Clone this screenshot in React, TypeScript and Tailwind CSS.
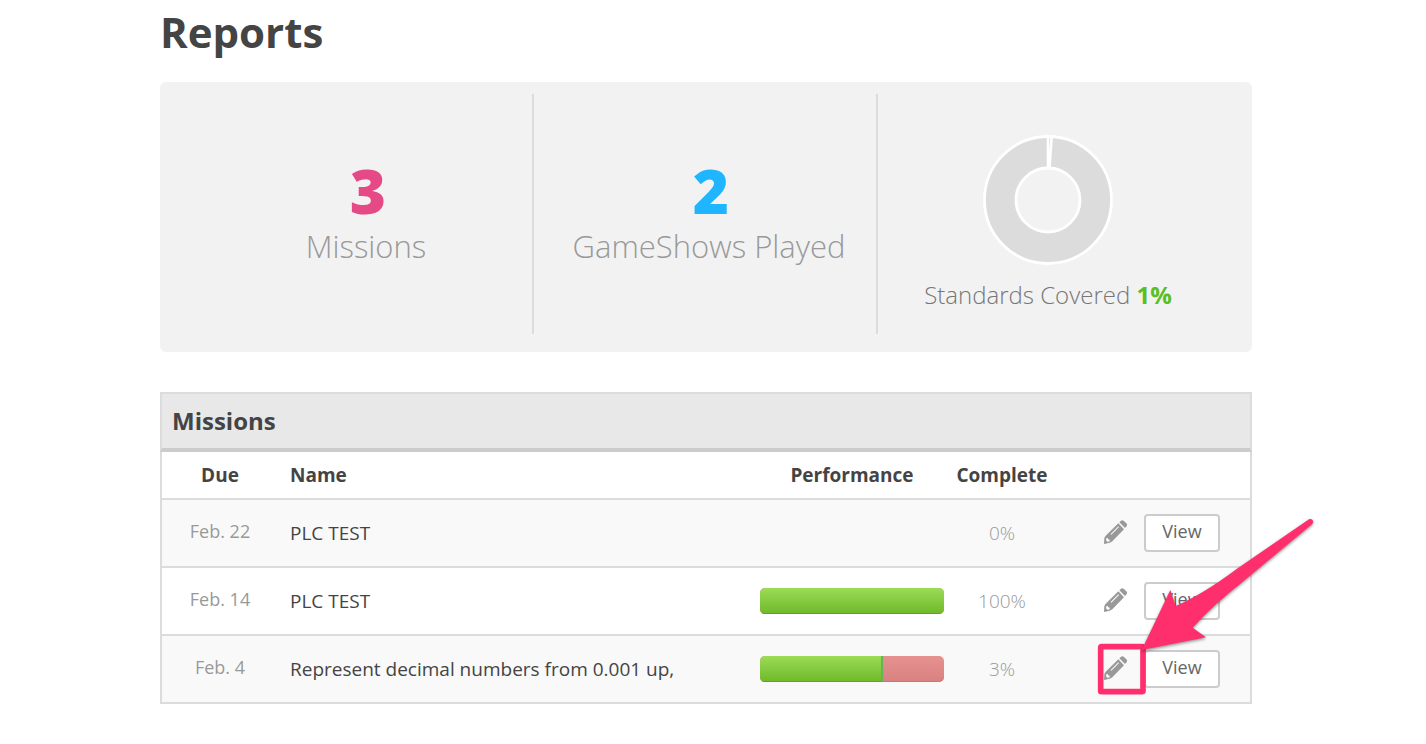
import clsx from "clsx";

interface Mission {
  id: number;
  due: string;
  name: string;
  complete: string;
  correct: number | null;
}

const missions: Mission[] = [
  { id: 1, due: "Feb. 22", name: "PLC TEST", complete: "0%", correct: null },
  { id: 2, due: "Feb. 14", name: "PLC TEST", complete: "100%", correct: 100 },
  {
    id: 3,
    due: "Feb. 4",
    name: "Represent decimal numbers from 0.001 up,",
    complete: "3%",
    correct: 67,
  },
];

const PencilIcon = () => (
  <svg viewBox="0 0 69 72" className="w-[23px] h-6 fill-[#999999]" aria-hidden="true">
    <path d="M46 7 L51 2 Q55 -1 59 2 L67 10 Q71 14 68 18 L63 24 Z" />
    <path
      fillRule="evenodd"
      d="M43 10 L60 28 L25 64 Q22 67 17 68 L0 72 L1 55 Q2 50 5 47 Z M20 42 L22 44 L45 21 L43 19 Z M7 55 L6 61 L11 66 L17 64 L17 59 L13 58 L11 54 Z"
    />
  </svg>
);

const StandardsChart = () => (
  <svg viewBox="0 0 130 130" className="w-[130px] h-[130px]" role="img" aria-label="Standards Covered">
    <circle cx="65" cy="65" r="48" fill="none" stroke="#dcdcdc" strokeWidth="32" />
    <circle cx="65" cy="65" r="63.5" fill="none" stroke="#ffffff" strokeWidth="2.8" />
    <circle cx="65" cy="65" r="32" fill="none" stroke="#ffffff" strokeWidth="2.8" />
    <path d="M65 33 V2 M66.5 33 L68.6 2" stroke="#ffffff" strokeWidth="2.6" />
  </svg>
);

interface StatProps {
  value: number;
  label: string;
  className: string;
  valueClassName: string;
}

const Stat = ({ value, label, className, valueClassName }: StatProps) => (
  <div className={clsx("flex flex-col items-center border-r-2 border-[#dcdcdc] pt-16", className)}>
    <span className={clsx("pl-1 text-[62px] leading-[64px] font-extrabold", valueClassName)}>
      {value}
    </span>
    <span className="text-[31px] leading-[48px] font-light text-[#999999]">{label}</span>
  </div>
);

const PerformanceBar = ({ correct }: { correct: number }) => (
  <div className="flex overflow-hidden h-[26px] rounded-[5px] bg-linear-to-b from-[#e69290] to-[#d98180] shadow-[inset_0_-1px_0_#c97776]">
    <div
      className={clsx(
        "bg-linear-to-b from-[#9bdc55] to-[#71ba2b] border-b border-[#5da51f]",
        correct < 100 && "border-r-2 border-r-[#64b558]"
      )}
      style={{ width: `${correct}%` }}
    />
  </div>
);

const Arrow = () => (
  <svg
    viewBox="0 0 720 612"
    className="absolute -right-[68px] bottom-0 w-[240px] h-[204px] pointer-events-none"
    aria-hidden="true"
  >
    <rect
      x="62"
      y="440"
      width="127"
      height="135"
      rx="3"
      fill="none"
      stroke="#ff2f6e"
      strokeWidth="17"
      strokeLinejoin="round"
    />
    <path
      className="drop-shadow-[0_4px_4px_rgba(0,0,0,0.45)]"
      d="M185 450 L271 270 L287 318 Q370 282 470 207 L687 58 Q695 54 699 62 Q701 69 694 74 L490 244 Q400 315 338 383 L378 412 Z"
      fill="#ff2f6e"
    />
  </svg>
);

const App = () => {
  return (
    <main className="pt-2 pr-[174px] pb-10 pl-40 min-h-screen bg-white font-['Open_Sans','Noto_Sans',sans-serif] text-[#444444]">
      <h1 className="text-[42px] leading-[48px] font-bold">Reports</h1>

      <section className="grid grid-cols-[334fr_344fr_334fr] px-10 pt-3 pb-[18px] mt-[26px] bg-[#f2f2f2] rounded-md">
        <Stat value={3} label="Missions" className="h-60" valueClassName="text-[#e54a86]" />
        <Stat
          value={2}
          label="GameShows Played"
          className="pl-2"
          valueClassName="text-[#1fb5ff]"
        />
        <div className="flex flex-col items-center pt-[41px] pl-1.5">
          <StandardsChart />
          <p className="mt-3 text-2xl leading-9 font-light whitespace-nowrap text-[#777777]">
            Standards Covered <span className="font-bold text-[#5bbf21]">1%</span>
          </p>
        </div>
      </section>

      <section className="relative mt-10">
        <h2 className="px-[10px] h-[60px] text-2xl leading-[53px] font-bold bg-[#e8e8e8] border-2 border-b-4 border-[#dcdcdc] border-b-[#cccccc]">
          Missions
        </h2>
        <table className="w-full text-[19px] leading-6 border-separate table-fixed border-spacing-0 border-x-2 border-[#dcdcdc]">
          <thead>
            <tr className="h-12 *:border-b-2 *:border-[#dcdcdc]">
              <th className="w-[116px]">Due</th>
              <th className="pl-3 text-left">Name</th>
              <th className="w-[208px]">Performance</th>
              <th className="w-[92px]">Complete</th>
              <th className="w-[202px]" aria-label="Actions" />
            </tr>
          </thead>
          <tbody>
            {missions.map(({ id, due, name, complete, correct }) => (
              <tr key={id} className="h-[68px] odd:bg-[#f9f9f9] *:border-b-2 *:border-[#dcdcdc]">
                <td className="pb-1 text-lg leading-6 text-center text-[#999999]">{due}</td>
                <td className="pl-3">{name}</td>
                <td className="px-3">{correct !== null && <PerformanceBar correct={correct} />}</td>
                <td className="font-light text-center text-[#999999]">{complete}</td>
                <td className="pr-[30px]">
                  <div className="flex gap-[17px] justify-end items-center">
                    <button type="button" aria-label="Edit" className="pb-0.5">
                      <PencilIcon />
                    </button>
                    <button
                      type="button"
                      className="pb-1 w-[76px] h-[38px] text-lg leading-6 text-[#666666] bg-white rounded-[4px] border-2 border-[#cccccc]"
                    >
                      View
                    </button>
                  </div>
                </td>
              </tr>
            ))}
          </tbody>
        </table>
        <Arrow />
      </section>
    </main>
  );
};

export default App;
